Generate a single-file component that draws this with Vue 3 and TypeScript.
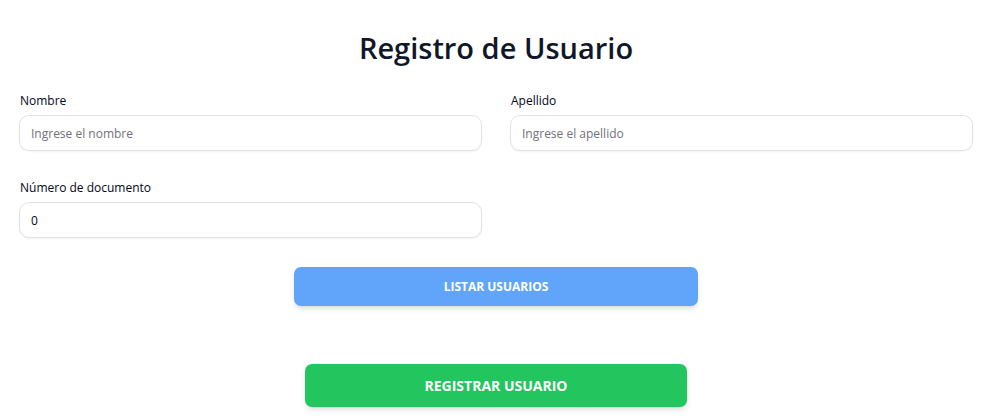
<script setup lang="ts">
import { ref } from 'vue'

const nombre = ref('')
const apellido = ref('')
const documento = ref(0)
</script>

<template>
  <main class="page">
    <h1 class="title">Registro de Usuario</h1>
    <form class="form" @submit.prevent>
      <div class="fields">
        <div class="field">
          <label for="nombre">Nombre</label>
          <input id="nombre" v-model="nombre" type="text" placeholder="Ingrese el nombre" />
        </div>
        <div class="field">
          <label for="apellido">Apellido</label>
          <input id="apellido" v-model="apellido" type="text" placeholder="Ingrese el apellido" />
        </div>
        <div class="field">
          <label for="documento">Número de documento</label>
          <input id="documento" v-model="documento" type="number" />
        </div>
      </div>
      <button class="button list" type="button">LISTAR USUARIOS</button>
      <button class="button register" type="submit">REGISTRAR USUARIO</button>
    </form>
  </main>
</template>

<style>
body {
  background: #fff;
}
</style>

<style scoped>
.page {
  padding: 28px 12px 12px 19px;
  font-family: "Segoe UI", "Open Sans", "Noto Sans", sans-serif;
  color: #020617;
}
.title {
  margin: 0 0 20px;
  font-size: 29px;
  font-weight: 600;
  line-height: 40px;
  text-align: center;
  color: #0f172a;
}
.form {
  display: flex;
  flex-direction: column;
  align-items: center;
}
.fields {
  display: grid;
  grid-template-columns: 1fr 1fr;
  gap: 24px 28px;
  width: 100%;
}
.field {
  display: flex;
  flex-direction: column;
  gap: 2px;
}
.field label {
  padding: 4px 1px;
  font-size: 12px;
  line-height: 17px;
}
.field input {
  box-sizing: border-box;
  width: 100%;
  height: 36px;
  padding: 0 11px;
  border: 1px solid #e2e2e5;
  border-radius: 10px;
  background: #fff;
  box-shadow: 0 1px 2px rgb(0 0 0 / 5%);
  font: inherit;
  font-size: 12px;
  color: #020617;
  appearance: textfield;
}
.field input::placeholder {
  color: #71717a;
  opacity: 1;
}
.button {
  border: 0;
  border-radius: 7px;
  font: inherit;
  font-weight: 700;
  color: #fff;
  box-shadow: 0 4px 6px -1px rgb(0 0 0 / 10%), 0 2px 4px -2px rgb(0 0 0 / 10%);
  cursor: pointer;
}
.list {
  width: 42.4%;
  height: 39px;
  margin-top: 29px;
  background: #60a5fa;
  font-size: 12px;
}
.register {
  width: 40%;
  height: 43px;
  margin-top: 58px;
  background: #22c55e;
  font-size: 14px;
}
</style>
